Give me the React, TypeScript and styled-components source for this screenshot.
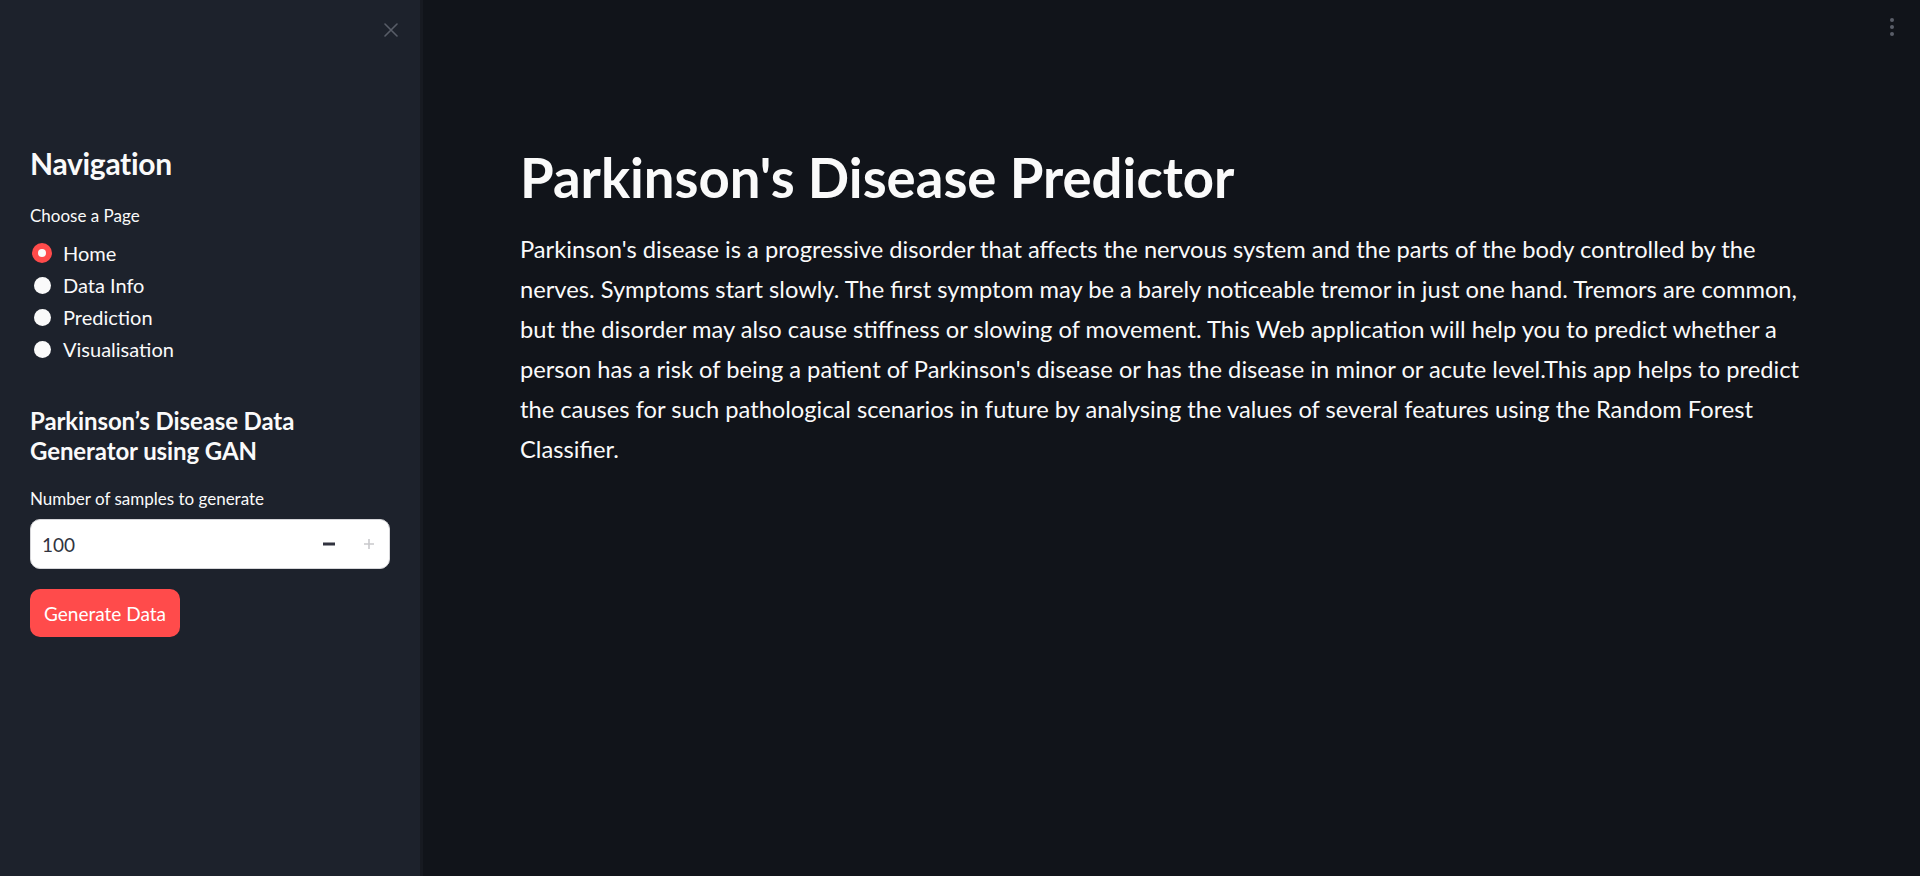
import React from "react";
import styled, { createGlobalStyle } from "styled-components";

const GlobalStyle = createGlobalStyle`
  html, body { margin: 0; padding: 0; background: #11141a; }
  body { font-family: "Lato", "Noto Sans", sans-serif; color: #fafafa; }
  * { box-sizing: border-box; }
`;

const Shell = styled.div`
  display: flex;
  height: 876px;
  width: 1920px;
  overflow: hidden;
`;

const Sidebar = styled.aside`
  width: 420px;
  flex: 0 0 420px;
  background: #1d222c;
  display: flex;
  flex-direction: column;
  box-shadow: 3px 0 0 #171a21;
`;

const SidebarHeader = styled.div`
  height: 60px;
  display: flex;
  align-items: center;
  justify-content: flex-end;
  padding-right: 21px;
`;

const IconButton = styled.button`
  width: 16px;
  height: 16px;
  padding: 0;
  border: none;
  background: transparent;
  display: flex;
  align-items: center;
  justify-content: center;
  color: #585d68;
`;

const SidebarBody = styled.div`
  padding: 0 30px;
  display: flex;
  flex-direction: column;
`;

const NavTitle = styled.h2`
  margin: 85px 0 0;
  font-size: 30px;
  line-height: 36px;
  font-weight: 700;
  letter-spacing: -0.3px;
`;

const Label = styled.div<{ $top: number }>`
  margin-top: ${(p) => p.$top}px;
  font-size: 17px;
  line-height: 22px;
  color: #fafafa;
`;

const RadioGroup = styled.div`
  margin-top: 10px;
  display: flex;
  flex-direction: column;
`;

const RadioRow = styled.label`
  height: 32px;
  display: flex;
  align-items: center;
  gap: 11px;
  padding-left: 2px;
  font-size: 20px;
`;

const RadioDot = styled.span<{ $checked: boolean }>`
  width: 20px;
  height: 20px;
  flex: 0 0 20px;
  border-radius: 50%;
  display: flex;
  align-items: center;
  justify-content: center;
  background: ${(p) => (p.$checked ? "#ff4b4b" : "transparent")};
  &::after {
    content: "";
    display: block;
    border-radius: 50%;
    background: #fafafa;
    width: ${(p) => (p.$checked ? "8px" : "17px")};
    height: ${(p) => (p.$checked ? "8px" : "17px")};
  }
`;

const SubTitle = styled.h3`
  margin: 41px 0 0;
  font-size: 24px;
  line-height: 30px;
  font-weight: 700;
  letter-spacing: -0.1px;
`;

const NumberInput = styled.div`
  margin-top: 9px;
  height: 50px;
  background: #ffffff;
  border-radius: 10px;
  border: 1px solid #d6d6d9;
  display: flex;
  align-items: center;
  overflow: hidden;
`;

const InputValue = styled.span`
  flex: 1;
  padding-left: 11px;
  font-size: 19px;
  color: #31333f;
`;

const StepButton = styled.button`
  width: 40px;
  height: 100%;
  border: none;
  background: transparent;
  padding: 0;
  display: flex;
  align-items: center;
  justify-content: center;
`;

const PrimaryButton = styled.button`
  margin-top: 20px;
  width: 150px;
  height: 48px;
  border: none;
  border-radius: 10px;
  background: #ff4b4b;
  color: #ffffff;
  font-family: inherit;
  font-size: 19px;
  padding: 0;
`;

const Main = styled.main`
  flex: 1;
  display: flex;
  flex-direction: column;
`;

const MainHeader = styled.div`
  height: 54px;
  display: flex;
  align-items: center;
  justify-content: flex-end;
  padding-right: 26px;
`;

const MenuDots = styled.div`
  display: flex;
  flex-direction: column;
  gap: 3px;
  span {
    width: 4px;
    height: 4px;
    border-radius: 50%;
    background: #5a5e68;
  }
`;

const Content = styled.div`
  padding: 0 90px 0 100px;
`;

const Title = styled.h1`
  margin: 90px 0 0;
  font-size: 54.5px;
  line-height: 66px;
  font-weight: 700;
  letter-spacing: 0;
`;

const Paragraph = styled.p`
  margin: 19px 0 0;
  font-size: 23.7px;
  line-height: 40px;
  color: #fafafa;
`;

const pages = ["Home", "Data Info", "Prediction", "Visualisation"];

export default function App() {
  return (
    <>
      <GlobalStyle />
      <Shell>
        <Sidebar>
          <SidebarHeader>
            <IconButton aria-label="Close sidebar">
              <svg width="14" height="14" viewBox="0 0 14 14">
                <path d="M1 1L13 13M13 1L1 13" stroke="currentColor" strokeWidth="1.6" strokeLinecap="round" />
              </svg>
            </IconButton>
          </SidebarHeader>
          <SidebarBody>
            <NavTitle>Navigation</NavTitle>
            <Label $top={24}>Choose a Page</Label>
            <RadioGroup>
              {pages.map((p, i) => (
                <RadioRow key={p}>
                  <RadioDot $checked={i === 0} />
                  {p}
                </RadioRow>
              ))}
            </RadioGroup>
            <SubTitle>
              Parkinson’s Disease Data
              <br />
              Generator using GAN
            </SubTitle>
            <Label $top={22}>Number of samples to generate</Label>
            <NumberInput>
              <InputValue>100</InputValue>
              <StepButton aria-label="Decrement">
                <svg width="12" height="4" viewBox="0 0 12 4">
                  <rect x="0" y="0.5" width="12" height="3" fill="#31333f" />
                </svg>
              </StepButton>
              <StepButton aria-label="Increment">
                <svg width="12" height="12" viewBox="0 0 12 12">
                  <path d="M6 1V11M1 6H11" stroke="#c9c9cc" strokeWidth="1.6" />
                </svg>
              </StepButton>
            </NumberInput>
            <PrimaryButton>Generate Data</PrimaryButton>
          </SidebarBody>
        </Sidebar>
        <Main>
          <MainHeader>
            <MenuDots>
              <span />
              <span />
              <span />
            </MenuDots>
          </MainHeader>
          <Content>
            <Title>Parkinson's Disease Predictor</Title>
            <Paragraph>
              Parkinson's disease is a progressive disorder that affects the nervous system and the parts of the body
              controlled by the nerves. Symptoms start slowly. The first symptom may be a barely noticeable tremor in
              just one hand. Tremors are common, but the disorder may also cause stiffness or slowing of movement. This
              Web application will help you to predict whether a person has a risk of being a patient of Parkinson's
              disease or has the disease in minor or acute level.This app helps to predict the causes for such
              pathological scenarios in future by analysing the values of several features using the Random Forest
              Classifier.
            </Paragraph>
          </Content>
        </Main>
      </Shell>
    </>
  );
}
